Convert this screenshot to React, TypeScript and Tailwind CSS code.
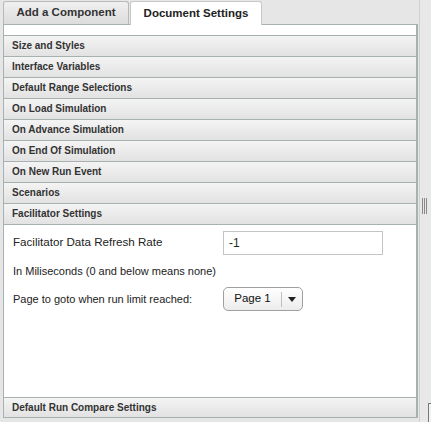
import React from "react";

const headers = [
  "Size and Styles",
  "Interface Variables",
  "Default Range Selections",
  "On Load Simulation",
  "On Advance Simulation",
  "On End Of Simulation",
  "On New Run Event",
  "Scenarios",
  "Facilitator Settings",
];

function Header({ label, last }: { label: string; last?: boolean }) {
  return (
    <div
      className={
        "h-[21px] border-t border-[#a9b0b0] bg-gradient-to-b from-[#f4f4f4] to-[#e2e2e2] pl-[8px] flex items-center text-[10px] font-bold text-[#333] leading-none" +
        (last ? " border-b" : "")
      }
    >
      {label}
    </div>
  );
}

export default function App() {
  return (
    <div
      className="w-[431px] h-[422px] bg-[#e6e6e6] flex overflow-hidden relative"
      style={{ fontFamily: '"Liberation Sans", Arial, sans-serif' }}
    >
      <div className="w-[419px] pl-[3px] flex flex-col">
        {/* tabs */}
        <div className="h-[25px] flex items-end border-b border-[#a9b0b0] w-[415px]">
          <div className="w-[126px] h-[23px] border border-b-0 border-[#b8b8b8] rounded-t-[3px] bg-gradient-to-b from-[#f0f0f0] to-[#dcdcdc] flex items-center justify-center text-[11.5px] font-bold text-[#333]">
            Add a Component
          </div>
          <div className="ml-[1px] w-[132px] h-[24px] -mb-px border border-b-0 border-[#c8c8c8] rounded-t-[3px] bg-white flex items-center justify-center text-[11.5px] font-bold text-[#222] relative">
            Document Settings
          </div>
        </div>
        {/* panel */}
        <div className="w-[415px] border-l border-r-2 border-[#a9b0b0] bg-white flex flex-col">
          <div className="h-[10px]" />
          {headers.map((h) => (
            <Header key={h} label={h} />
          ))}
          <div className="h-[173px] border-t border-[#a9b0b0] pt-[6px] text-[11px] text-[#222]">
            <div className="flex items-center">
              <div className="w-[219px] pl-[9px] text-[11.6px] -mt-[3px]">Facilitator Data Refresh Rate</div>
              <div className="w-[160px] h-[24px] border border-[#c4c4c4] flex items-center pl-[5px] text-[12px] text-[#1d2b1d]">
                -1
              </div>
            </div>
            <div className="pl-[9px] mt-[9px] leading-[14px]">
              In Miliseconds (0 and below means none)
            </div>
            <div className="flex items-center mt-[9px]">
              <div className="w-[219px] pl-[9px]">Page to goto when run limit reached:</div>
              <div className="w-[80px] h-[24px] border border-[#a0a0a0] rounded-[5px] bg-gradient-to-b from-[#ffffff] to-[#ececec] flex items-center">
                <div className="w-[57px] flex items-center justify-center text-[11.5px] text-[#111]">
                  Page 1
                </div>
                <div className="w-px h-[15px] bg-[#c0c0c0]" />
                <div className="flex-1 flex items-center justify-center">
                  <svg width="8" height="5" viewBox="0 0 8 5">
                    <path d="M0 0 H8 L4 5 Z" fill="#222" />
                  </svg>
                </div>
              </div>
            </div>
          </div>
          <Header label="Default Run Compare Settings" last />
        </div>
      </div>
      {/* splitter */}
      <div className="flex-1 relative border-l border-[#d0d0d0] bg-[#e8e8e8]">
        <div className="absolute left-[2px] top-[198px] flex gap-[1px]">
          <div className="w-px h-[16px] bg-[#888]" />
          <div className="w-px h-[16px] bg-[#888]" />
          <div className="w-px h-[16px] bg-[#888]" />
        </div>
        <div className="absolute left-[8px] top-[403px] w-[10px] h-[30px] border border-[#777] bg-[#f2f2f2]" />
      </div>
    </div>
  );
}
